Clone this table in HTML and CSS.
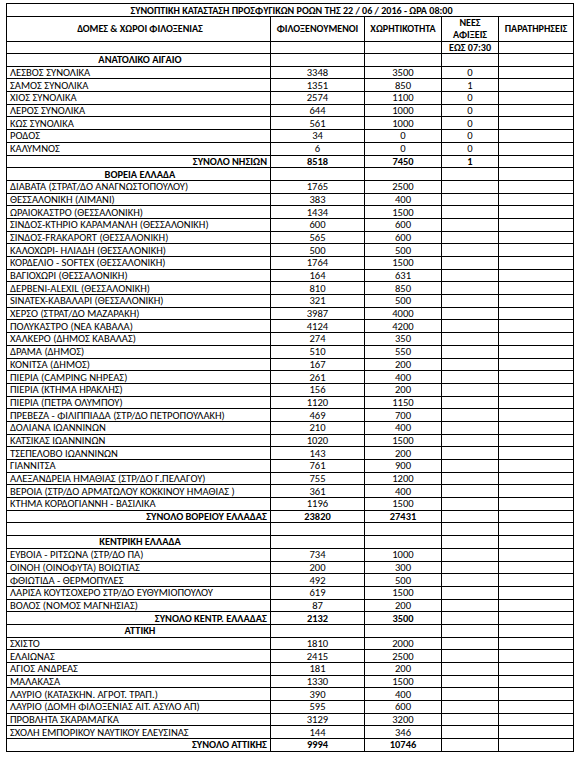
FILE: index.html
```html
<!DOCTYPE html>
<html lang="el">
<head>
<meta charset="utf-8">
<title>Συνοπτική κατάσταση προσφυγικών ροών</title>
<link rel="stylesheet" href="styles.css">
</head>
<body>
<div class="page">
<table class="sheet">
<colgroup>
<col class="c-name"><col class="c-guests"><col class="c-cap"><col class="c-new"><col class="c-notes">
</colgroup>
<tr class="title"><td colspan="5">ΣΥΝΟΠΤΙΚΗ ΚΑΤΑΣΤΑΣΗ ΠΡΟΣΦΥΓΙΚΩΝ ΡΟΩΝ ΤΗΣ 22 / 06 / 2016 - ΩΡΑ 08:00</td></tr>
<tr class="head"><td>ΔΟΜΕΣ &amp; ΧΩΡΟΙ ΦΙΛΟΞΕΝΙΑΣ</td><td>ΦΙΛΟΞΕΝΟΥΜΕΝΟΙ</td><td>ΧΩΡΗΤΙΚΟΤΗΤΑ</td><td>ΝΕΕΣ<br>ΑΦΙΞΕΙΣ</td><td>ΠΑΡΑΤΗΡΗΣΕΙΣ</td></tr>
<tr class="sub"><td></td><td></td><td></td><td>ΕΩΣ 07:30</td><td></td></tr>
<tr class="sec"><td>ΑΝΑΤΟΛΙΚΟ ΑΙΓΑΙΟ</td><td></td><td></td><td></td><td></td></tr>
<tr><td>ΛΕΣΒΟΣ ΣΥΝΟΛΙΚΑ</td><td>3348</td><td>3500</td><td>0</td><td></td></tr>
<tr><td>ΣΑΜΟΣ ΣΥΝΟΛΙΚΑ</td><td>1351</td><td>850</td><td>1</td><td></td></tr>
<tr><td>ΧΙΟΣ ΣΥΝΟΛΙΚΑ</td><td>2574</td><td>1100</td><td>0</td><td></td></tr>
<tr><td>ΛΕΡΟΣ ΣΥΝΟΛΙΚΑ</td><td>644</td><td>1000</td><td>0</td><td></td></tr>
<tr><td>ΚΩΣ ΣΥΝΟΛΙΚΑ</td><td>561</td><td>1000</td><td>0</td><td></td></tr>
<tr><td>ΡΟΔΟΣ</td><td>34</td><td>0</td><td>0</td><td></td></tr>
<tr><td>ΚΑΛΥΜΝΟΣ</td><td>6</td><td>0</td><td>0</td><td></td></tr>
<tr class="tot"><td>ΣΥΝΟΛΟ ΝΗΣΙΩΝ</td><td>8518</td><td>7450</td><td>1</td><td></td></tr>
<tr class="sec"><td>ΒΟΡΕΙΑ ΕΛΛΑΔΑ</td><td></td><td></td><td></td><td></td></tr>
<tr><td>ΔΙΑΒΑΤΑ (ΣΤΡΑΤ/ΔΟ ΑΝΑΓΝΩΣΤΟΠΟΥΛΟΥ)</td><td>1765</td><td>2500</td><td></td><td></td></tr>
<tr><td>ΘΕΣΣΑΛΟΝΙΚΗ (ΛΙΜΑΝΙ)</td><td>383</td><td>400</td><td></td><td></td></tr>
<tr><td>ΩΡΑΙΟΚΑΣΤΡΟ (ΘΕΣΣΑΛΟΝΙΚΗ)</td><td>1434</td><td>1500</td><td></td><td></td></tr>
<tr><td>ΣΙΝΔΟΣ-ΚΤΗΡΙΟ ΚΑΡΑΜΑΝΛΗ (ΘΕΣΣΑΛΟΝΙΚΗ)</td><td>600</td><td>600</td><td></td><td></td></tr>
<tr><td>ΣΙΝΔΟΣ-FRAKAPORT (ΘΕΣΣΑΛΟΝΙΚΗ)</td><td>565</td><td>600</td><td></td><td></td></tr>
<tr><td>ΚΑΛΟΧΩΡΙ- ΗΛΙΑΔΗ (ΘΕΣΣΑΛΟΝΙΚΗ)</td><td>500</td><td>500</td><td></td><td></td></tr>
<tr><td>ΚΟΡΔΕΛΙΟ - SOFTEX (ΘΕΣΣΑΛΟΝΙΚΗ)</td><td>1764</td><td>1500</td><td></td><td></td></tr>
<tr><td>ΒΑΓΙΟΧΩΡΙ (ΘΕΣΣΑΛΟΝΙΚΗ)</td><td>164</td><td>631</td><td></td><td></td></tr>
<tr><td>ΔΕΡΒΕΝΙ-ALEXIL (ΘΕΣΣΑΛΟΝΙΚΗ)</td><td>810</td><td>850</td><td></td><td></td></tr>
<tr><td>SINATEX-ΚΑΒΑΛΑΡΙ (ΘΕΣΣΑΛΟΝΙΚΗ)</td><td>321</td><td>500</td><td></td><td></td></tr>
<tr><td>ΧΕΡΣΟ (ΣΤΡΑΤ/ΔΟ ΜΑΖΑΡΑΚΗ)</td><td>3987</td><td>4000</td><td></td><td></td></tr>
<tr><td>ΠΟΛΥΚΑΣΤΡΟ (ΝΕΑ ΚΑΒΑΛΑ)</td><td>4124</td><td>4200</td><td></td><td></td></tr>
<tr><td>ΧΑΛΚΕΡΟ (ΔΗΜΟΣ ΚΑΒΑΛΑΣ)</td><td>274</td><td>350</td><td></td><td></td></tr>
<tr><td>ΔΡΑΜΑ (ΔΗΜΟΣ)</td><td>510</td><td>550</td><td></td><td></td></tr>
<tr><td>ΚΟΝΙΤΣΑ (ΔΗΜΟΣ)</td><td>167</td><td>200</td><td></td><td></td></tr>
<tr><td>ΠΙΕΡΙΑ (CAMPING ΝΗΡΕΑΣ)</td><td>261</td><td>400</td><td></td><td></td></tr>
<tr><td>ΠΙΕΡΙΑ (ΚΤΗΜΑ ΗΡΑΚΛΗΣ)</td><td>156</td><td>200</td><td></td><td></td></tr>
<tr><td>ΠΙΕΡΙΑ (ΠΕΤΡΑ ΟΛΥΜΠΟΥ)</td><td>1120</td><td>1150</td><td></td><td></td></tr>
<tr><td>ΠΡΕΒΕΖΑ - ΦΙΛΙΠΠΙΑΔΑ (ΣΤΡ/ΔΟ ΠΕΤΡΟΠΟΥΛΑΚΗ)</td><td>469</td><td>700</td><td></td><td></td></tr>
<tr><td>ΔΟΛΙΑΝΑ ΙΩΑΝΝΙΝΩΝ</td><td>210</td><td>400</td><td></td><td></td></tr>
<tr><td>ΚΑΤΣΙΚΑΣ ΙΩΑΝΝΙΝΩΝ</td><td>1020</td><td>1500</td><td></td><td></td></tr>
<tr><td>ΤΣΕΠΕΛΟΒΟ ΙΩΑΝΝΙΝΩΝ</td><td>143</td><td>200</td><td></td><td></td></tr>
<tr><td>ΓΙΑΝΝΙΤΣΑ</td><td>761</td><td>900</td><td></td><td></td></tr>
<tr><td>ΑΛΕΞΑΝΔΡΕΙΑ ΗΜΑΘΙΑΣ (ΣΤΡ/ΔΟ Γ.ΠΕΛΑΓΟΥ)</td><td>755</td><td>1200</td><td></td><td></td></tr>
<tr><td>ΒΕΡΟΙΑ (ΣΤΡ/ΔΟ ΑΡΜΑΤΩΛΟΥ ΚΟΚΚΙΝΟΥ ΗΜΑΘΙΑΣ )</td><td>361</td><td>400</td><td></td><td></td></tr>
<tr><td>ΚΤΗΜΑ ΚΟΡΔΟΓΙΑΝΝΗ - ΒΑΣΙΛΙΚΑ</td><td>1196</td><td>1500</td><td></td><td></td></tr>
<tr class="tot"><td>ΣΥΝΟΛΟ ΒΟΡΕΙΟΥ ΕΛΛΑΔΑΣ</td><td>23820</td><td>27431</td><td></td><td></td></tr>
<tr><td></td><td></td><td></td><td></td><td></td></tr>
<tr class="sec"><td>ΚΕΝΤΡΙΚΗ ΕΛΛΑΔΑ</td><td></td><td></td><td></td><td></td></tr>
<tr><td>ΕΥΒΟΙΑ - ΡΙΤΣΩΝΑ (ΣΤΡ/ΔΟ ΠΑ)</td><td>734</td><td>1000</td><td></td><td></td></tr>
<tr><td>ΟΙΝΟΗ (ΟΙΝΟΦΥΤΑ) ΒΟΙΩΤΙΑΣ</td><td>200</td><td>300</td><td></td><td></td></tr>
<tr><td>ΦΘΙΩΤΙΔΑ - ΘΕΡΜΟΠΥΛΕΣ</td><td>492</td><td>500</td><td></td><td></td></tr>
<tr><td>ΛΑΡΙΣΑ ΚΟΥΤΣΟΧΕΡΟ ΣΤΡ/ΔΟ ΕΥΘΥΜΙΟΠΟΥΛΟΥ</td><td>619</td><td>1500</td><td></td><td></td></tr>
<tr><td>ΒΟΛΟΣ (ΝΟΜΟΣ ΜΑΓΝΗΣΙΑΣ)</td><td>87</td><td>200</td><td></td><td></td></tr>
<tr class="tot"><td>ΣΥΝΟΛΟ ΚΕΝΤΡ. ΕΛΛΑΔΑΣ</td><td>2132</td><td>3500</td><td></td><td></td></tr>
<tr class="sec"><td>ΑΤΤΙΚΗ</td><td></td><td></td><td></td><td></td></tr>
<tr><td>ΣΧΙΣΤΟ</td><td>1810</td><td>2000</td><td></td><td></td></tr>
<tr><td>ΕΛΑΙΩΝΑΣ</td><td>2415</td><td>2500</td><td></td><td></td></tr>
<tr><td>ΑΓΙΟΣ ΑΝΔΡΕΑΣ</td><td>181</td><td>200</td><td></td><td></td></tr>
<tr><td>ΜΑΛΑΚΑΣΑ</td><td>1330</td><td>1500</td><td></td><td></td></tr>
<tr><td>ΛΑΥΡΙΟ (ΚΑΤΑΣΚΗΝ. ΑΓΡΟΤ. ΤΡΑΠ.)</td><td>390</td><td>400</td><td></td><td></td></tr>
<tr><td>ΛΑΥΡΙΟ (ΔΟΜΗ ΦΙΛΟΞΕΝΙΑΣ ΑΙΤ. ΑΣΥΛΟ ΑΠ)</td><td>595</td><td>600</td><td></td><td></td></tr>
<tr><td>ΠΡΟΒΛΗΤΑ ΣΚΑΡΑΜΑΓΚΑ</td><td>3129</td><td>3200</td><td></td><td></td></tr>
<tr><td>ΣΧΟΛΗ ΕΜΠΟΡΙΚΟΥ ΝΑΥΤΙΚΟΥ ΕΛΕΥΣΙΝΑΣ</td><td>144</td><td>346</td><td></td><td></td></tr>
<tr class="tot"><td>ΣΥΝΟΛΟ ΑΤΤΙΚΗΣ</td><td>9994</td><td>10746</td><td></td><td></td></tr>
</table>
</div>
</body>
</html>
```

FILE: styles.css
```css
html, body {
  margin: 0;
  padding: 0;
  background: #fff;
}
.page {
  padding: 3px 7px 0 6px;
}
.sheet {
  border-collapse: collapse;
  table-layout: fixed;
  width: 567px;
  font-family: Carlito, "Liberation Sans", Arial, sans-serif;
  font-size: 10.6px;
  color: #000;
}
.c-name { width: 264px; }
.c-guests { width: 94px; }
.c-cap { width: 77px; }
.c-new { width: 57px; }
.c-notes { width: 75px; }
.sheet td {
  border: 1px solid #000;
  height: 11.7px;
  padding: 0;
  line-height: 11px;
  text-align: center;
  white-space: nowrap;
  overflow: hidden;
  vertical-align: middle;
}
.sheet td:first-child {
  text-align: left;
  padding-left: 3px;
}
.title td {
  height: 12px;
  font-size: 10.1px;
  font-weight: bold;
  text-align: center !important;
}
.head td {
  height: 24px;
  font-size: 10.1px;
  line-height: 12px;
  font-weight: bold;
  text-align: center !important;
}
.sub td {
  height: 11px;
  font-size: 10.1px;
  font-weight: bold;
}
.sec td:first-child {
  font-size: 10.4px;
  font-weight: bold;
  text-align: center;
}
.tot td {
  font-size: 10.4px;
  font-weight: bold;
}
.tot td:first-child {
  text-align: right;
  padding-right: 3px;
}
```
